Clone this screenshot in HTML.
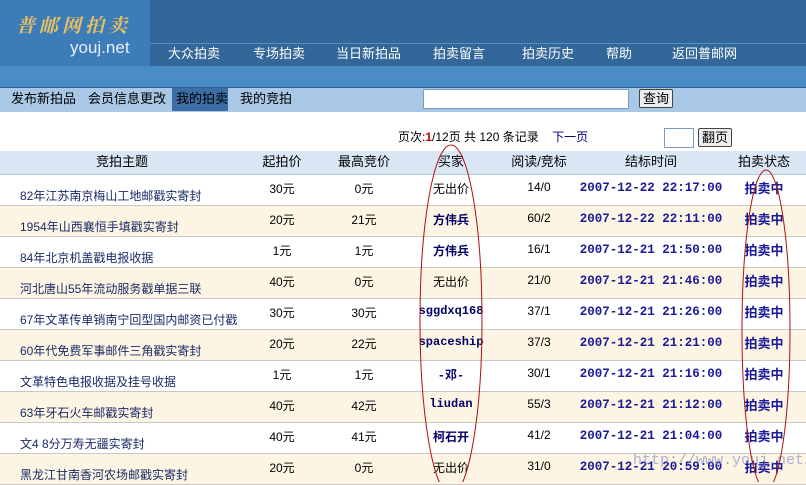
<!DOCTYPE html>
<html><head><meta charset="utf-8"><style>
body{margin:0;width:806px;height:482px;overflow:hidden;position:relative;background:#fff;font-family:"Liberation Sans","Noto Sans CJK SC",sans-serif;font-size:12px;color:#000}
.a{position:absolute;white-space:nowrap}
#top{left:0;top:0;width:806px;height:66px;background:#336699}
#logo{left:0;top:0;width:150px;height:66px;background:#3c7cb8}
#line{left:150px;top:43px;width:656px;height:1px;background:#5a8fc4}
#band{left:0;top:66px;width:806px;height:21px;background:#4a8cc6}
#sub{left:0;top:87px;width:806px;height:24px;background:#a8c8e6;border-top:1px solid #2d5f95}
.nav{color:#fff;font-size:13px;top:43px}
.sn{top:88px;font-size:13px;color:#000}
#hdr{left:0;top:151px;width:806px;height:23px;background:#d9e6f3;border-bottom:1px solid #b8c8d8}
.h{top:151px;font-size:13px;transform:translateX(-50%)}
.row{position:absolute;left:0;width:806px;height:30px;border-bottom:1px solid #c8c8c8}
.c{position:absolute;top:5px;transform:translateX(-50%);white-space:nowrap;font-size:12px}
.t{position:absolute;left:20px;top:12px;color:#1a2a66;font-size:12px;white-space:nowrap}
.b{font-weight:bold;color:#000066;font-family:"Liberation Mono","Noto Sans CJK SC",monospace}
.d{font-weight:bold;color:#1a1a99;font-family:"Liberation Mono",monospace;font-size:12.5px;top:6px}
.s{font-weight:bold;color:#1a1a99;font-size:13px;top:3px}
</style></head><body>
<div class="a" id="top"></div><div class="a" id="logo"></div><div class="a" id="line"></div>
<div class="a" style="left:16px;top:11px;font-size:19px;color:#e8c060;font-family:'Noto Serif CJK SC',serif;font-weight:bold;letter-spacing:4px;font-style:italic">普邮网拍卖</div>
<div class="a" style="left:70px;top:38px;font-size:17px;color:#e8eef8">youj.net</div>
<div class="a nav" style="left:168px">大众拍卖</div>
<div class="a nav" style="left:253px">专场拍卖</div>
<div class="a nav" style="left:336px">当日新拍品</div>
<div class="a nav" style="left:433px">拍卖留言</div>
<div class="a nav" style="left:522px">拍卖历史</div>
<div class="a nav" style="left:606px">帮助</div>
<div class="a nav" style="left:672px">返回普邮网</div>
<div class="a" id="band"></div>
<div class="a" id="sub"></div>
<div class="a" style="left:172px;top:88px;width:56px;height:23px;background:#3a6ea5"></div>
<div class="a sn" style="left:11px">发布新拍品</div>
<div class="a sn" style="left:88px">会员信息更改</div>
<div class="a sn" style="left:176px">我的拍卖</div>
<div class="a sn" style="left:240px">我的竞拍</div>
<div class="a" style="left:423px;top:89px;width:204px;height:18px;background:#fff;border:1px solid #7a9cc0"></div>
<div class="a" style="left:639px;top:89px;width:32px;height:17px;background:#eee;border:1px solid #444;border-radius:2px;font-size:13px;text-align:center;line-height:17px">查询</div>
<div class="a" style="left:398px;top:128px;font-size:12px">页次:<b style="color:#c00">1</b>/12页 共 120 条记录 &nbsp;&nbsp;&nbsp;<span style="color:#000080">下一页</span></div>
<div class="a" style="left:664px;top:128px;width:28px;height:18px;border:1px solid #7a9cc0"></div>
<div class="a" style="left:698px;top:128px;width:32px;height:17px;background:#eee;border:1px solid #444;border-radius:2px;font-size:13px;text-align:center;line-height:17px">翻页</div>
<div class="a" id="hdr"></div>
<div class="a h" style="left:122px">竞拍主题</div>
<div class="a h" style="left:282px">起拍价</div>
<div class="a h" style="left:364px">最高竞价</div>
<div class="a h" style="left:451px">买家</div>
<div class="a h" style="left:539px">阅读/竞标</div>
<div class="a h" style="left:651px">结标时间</div>
<div class="a h" style="left:764px">拍卖状态</div>

<div class="row" style="top:175px;background:#fff"><span class="t">82年江苏南京梅山工地邮戳实寄封</span><span class="c" style="left:282px">30元</span><span class="c" style="left:364px">0元</span><span class="c" style="left:451px">无出价</span><span class="c" style="left:539px">14/0</span><span class="c d" style="left:651px">2007-12-22 22:17:00</span><span class="c s" style="left:764px">拍卖中</span></div>
<div class="row" style="top:206px;background:#fdf5e4"><span class="t">1954年山西襄恒手填戳实寄封</span><span class="c" style="left:282px">20元</span><span class="c" style="left:364px">21元</span><span class="c b" style="left:451px">方伟兵</span><span class="c" style="left:539px">60/2</span><span class="c d" style="left:651px">2007-12-22 22:11:00</span><span class="c s" style="left:764px">拍卖中</span></div>
<div class="row" style="top:237px;background:#fff"><span class="t">84年北京机盖戳电报收据</span><span class="c" style="left:282px">1元</span><span class="c" style="left:364px">1元</span><span class="c b" style="left:451px">方伟兵</span><span class="c" style="left:539px">16/1</span><span class="c d" style="left:651px">2007-12-21 21:50:00</span><span class="c s" style="left:764px">拍卖中</span></div>
<div class="row" style="top:268px;background:#fdf5e4"><span class="t">河北唐山55年流动服务戳单据三联</span><span class="c" style="left:282px">40元</span><span class="c" style="left:364px">0元</span><span class="c" style="left:451px">无出价</span><span class="c" style="left:539px">21/0</span><span class="c d" style="left:651px">2007-12-21 21:46:00</span><span class="c s" style="left:764px">拍卖中</span></div>
<div class="row" style="top:299px;background:#fff"><span class="t">67年文革传单销南宁回型国内邮资已付戳</span><span class="c" style="left:282px">30元</span><span class="c" style="left:364px">30元</span><span class="c b" style="left:451px">sggdxq168</span><span class="c" style="left:539px">37/1</span><span class="c d" style="left:651px">2007-12-21 21:26:00</span><span class="c s" style="left:764px">拍卖中</span></div>
<div class="row" style="top:330px;background:#fdf5e4"><span class="t">60年代免费军事邮件三角戳实寄封</span><span class="c" style="left:282px">20元</span><span class="c" style="left:364px">22元</span><span class="c b" style="left:451px">spaceship</span><span class="c" style="left:539px">37/3</span><span class="c d" style="left:651px">2007-12-21 21:21:00</span><span class="c s" style="left:764px">拍卖中</span></div>
<div class="row" style="top:361px;background:#fff"><span class="t">文革特色电报收据及挂号收据</span><span class="c" style="left:282px">1元</span><span class="c" style="left:364px">1元</span><span class="c b" style="left:451px">-邓-</span><span class="c" style="left:539px">30/1</span><span class="c d" style="left:651px">2007-12-21 21:16:00</span><span class="c s" style="left:764px">拍卖中</span></div>
<div class="row" style="top:392px;background:#fdf5e4"><span class="t">63年牙石火车邮戳实寄封</span><span class="c" style="left:282px">40元</span><span class="c" style="left:364px">42元</span><span class="c b" style="left:451px">liudan</span><span class="c" style="left:539px">55/3</span><span class="c d" style="left:651px">2007-12-21 21:12:00</span><span class="c s" style="left:764px">拍卖中</span></div>
<div class="row" style="top:423px;background:#fff"><span class="t">文4 8分万寿无疆实寄封</span><span class="c" style="left:282px">40元</span><span class="c" style="left:364px">41元</span><span class="c b" style="left:451px">柯石开</span><span class="c" style="left:539px">41/2</span><span class="c d" style="left:651px">2007-12-21 21:04:00</span><span class="c s" style="left:764px">拍卖中</span></div>
<div class="row" style="top:454px;background:#fdf5e4"><span class="t">黑龙江甘南香河农场邮戳实寄封</span><span class="c" style="left:282px">20元</span><span class="c" style="left:364px">0元</span><span class="c" style="left:451px">无出价</span><span class="c" style="left:539px">31/0</span><span class="c d" style="left:651px">2007-12-21 20:59:00</span><span class="c s" style="left:764px">拍卖中</span></div>

<div class="a" style="left:633px;top:452px;font-size:15px;color:rgba(120,130,200,0.6);font-family:'Liberation Mono',monospace">http://www.youj.net/</div>
<svg class="a" style="left:0;top:0" width="806" height="482"><ellipse cx="451" cy="320" rx="31" ry="175" fill="none" stroke="#b01010" stroke-width="1"/><ellipse cx="766" cy="330" rx="24" ry="160" fill="none" stroke="#b01010" stroke-width="1"/></svg>
</body></html>
